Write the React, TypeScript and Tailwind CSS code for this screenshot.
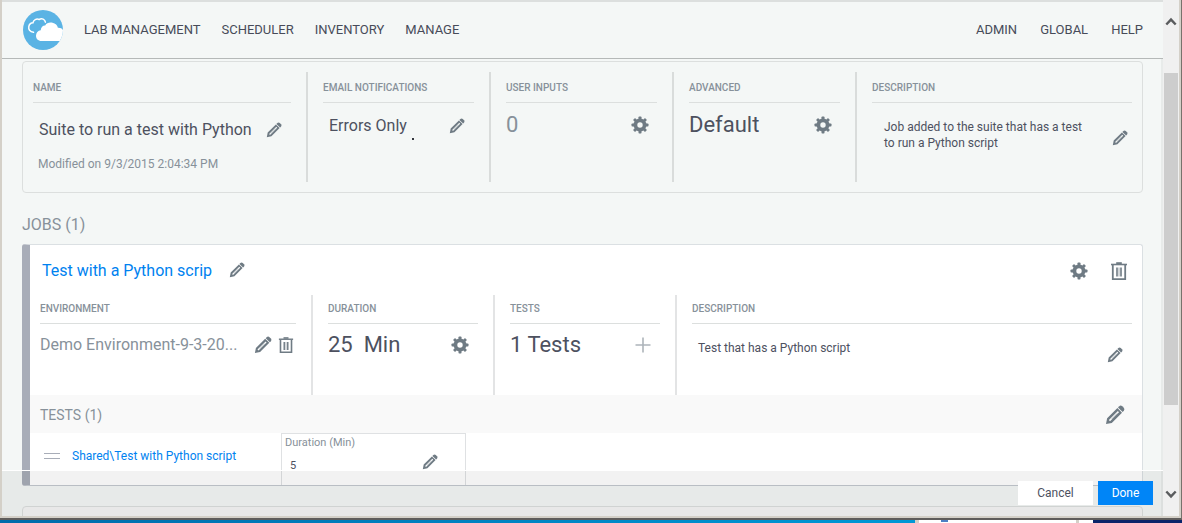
import React from 'react';

function Pencil({ size = 16 }: { size?: number }) {
  return (
    <svg width={size} height={size} viewBox="0 0 16 16" fill="#6f7b84" aria-hidden="true">
      <path
        fillRule="evenodd"
        d="M0.8 15.2 L1.7 10.6 L9.9 2.4 L13.6 6.1 L5.4 14.3 Z M4 12.9 L11.2 5.7 L10.3 4.8 L3.1 12 Z"
      />
      <path d="M10.4 1.9 L11.4 0.9 Q12.6 0 13.8 1 L15 2.2 Q16 3.4 15.1 4.6 L14.1 5.6 Z" />
      <path d="M5.4 11.2 L9.9 6.7" stroke="#a3abb1" strokeWidth="0.8" />
    </svg>
  );
}

const TEETH = [0, 45, 90, 135, 180, 225, 270, 315];

function Gear() {
  return (
    <svg width="18" height="18" viewBox="0 0 18 18" aria-hidden="true">
      <circle cx="9" cy="9" r="4.6" fill="none" stroke="#6f7b84" strokeWidth="3.8" />
      {TEETH.map((a) => (
        <rect key={a} x="7.5" y="0.5" width="3" height="4" rx="0.8" fill="#6f7b84" transform={`rotate(${a} 9 9)`} />
      ))}
    </svg>
  );
}

function Trash({ size = 18 }: { size?: number }) {
  return (
    <svg width={size} height={size} viewBox="0 0 18 18" fill="none" stroke="#6f7b84" aria-hidden="true">
      <path d="M1 2.5H17" strokeWidth="1.6" />
      <path d="M6.2 1.1H11.8" strokeWidth="1.8" />
      <path d="M2.8 3V17.1H15.2V3" strokeWidth="1.8" />
      <path d="M7 5.5V14.5M11 5.5V14.5" strokeWidth="1.6" />
      <path d="M9 5.5V14.5" strokeWidth="1.5" stroke="#c3c8cc" />
    </svg>
  );
}

function IconButton({ label, children }: { label: string; children: React.ReactNode }) {
  return (
    <button type="button" aria-label={label} className="flex shrink-0 items-center justify-center">
      {children}
    </button>
  );
}

function Logo() {
  return (
    <svg width="40" height="40" viewBox="0 0 40 40" aria-label="Home" role="img">
      <defs>
        <clipPath id="disc">
          <circle cx="20" cy="20" r="20" />
        </clipPath>
      </defs>
      <circle cx="20" cy="20" r="20" fill="#5ab3e4" />
      <g clipPath="url(#disc)">
        <path
          d="M10.5 22.3 C6.8 21.8 5.3 19.3 5.8 16.6 C6.2 14.2 8 12.8 10 12.7 C10.5 9.8 13.5 8.4 16.2 9.5 C18.8 7.8 22 9.3 22.4 12.2"
          fill="none"
          stroke="#fff"
          strokeWidth="1.5"
          strokeLinecap="round"
        />
        <path
          d="M18.5 31 C15 31 13 28.5 13 25.7 C13 22.7 15 20.6 17.7 20.2 C18 17 20 15.3 22.2 15.5 C23.5 13 26.5 12.2 29.5 12.8 C32.5 13.3 34.4 15.4 34.9 17.8 C37 17.6 39 18.4 40 20 V31 Z"
          fill="#fff"
        />
      </g>
    </svg>
  );
}

const navLink = 'text-[13px] leading-5 text-[#474b59]';

function Header() {
  return (
    <header className="flex h-[59px] shrink-0 items-center border-t-2 border-b border-t-[#dcdfde] border-b-[#b5b9b8] pr-5 pl-[21px]">
      <Logo />
      <nav className="ml-[21px] flex flex-1 items-center gap-[21px]">
        <a href="#lab" className={navLink}>LAB MANAGEMENT</a>
        <a href="#scheduler" className={navLink}>SCHEDULER</a>
        <a href="#inventory" className={navLink}>INVENTORY</a>
        <a href="#manage" className={navLink}>MANAGE</a>
      </nav>
      <nav className="flex items-center gap-[23px]">
        <a href="#admin" className={navLink}>ADMIN</a>
        <a href="#global" className={navLink}>GLOBAL</a>
        <a href="#help" className={navLink}>HELP</a>
      </nav>
    </header>
  );
}

function Label({ tight, children }: { tight?: boolean; children: React.ReactNode }) {
  return (
    <h3
      className={`${tight ? 'py-[6px]' : 'pt-2 pb-[6px]'} border-b border-[#dcdfde] text-[10px] leading-4 font-medium whitespace-nowrap text-[#87919a]`}
    >
      {children}
    </h3>
  );
}

function SuiteCard() {
  const col = 'w-[183px] shrink-0 border-r-2 border-[#d9dcdb] px-[15px]';
  return (
    <section className="flex h-[132px] rounded-[4px] border border-[#dcdfde] p-[10px]">
      <div className="w-[275px] shrink-0 border-r-2 border-[#d9dcdb] pr-[15px]">
        <Label>NAME</Label>
        <div className="flex items-center justify-between pt-[15px] pr-[9px] pl-[6px]">
          <span className="text-base leading-6 whitespace-nowrap text-[#4d515f]">Suite to run a test with Python</span>
          <IconButton label="Edit name"><Pencil /></IconButton>
        </div>
        <p className="mt-[14px] pl-[5px] text-xs leading-4 text-[#87919a]">Modified on 9/3/2015 2:04:34 PM</p>
      </div>
      <div className={col}>
        <Label>EMAIL NOTIFICATIONS</Label>
        <div className="flex items-center justify-between pt-[11px] pr-[9px] pl-[6px]">
          <span className="relative text-base leading-6 text-[#4d515f]">
            Errors Only
            <i className="absolute -right-[7px] -bottom-[2px] size-[2px] bg-[#33363d]" />
          </span>
          <IconButton label="Edit email notifications"><Pencil /></IconButton>
        </div>
      </div>
      <div className={col}>
        <Label>USER INPUTS</Label>
        <div className="flex items-center justify-between pt-[6px] pr-2">
          <span className="text-[22px] leading-8 text-[#87919a]">0</span>
          <IconButton label="User input settings"><Gear /></IconButton>
        </div>
      </div>
      <div className={col}>
        <Label>ADVANCED</Label>
        <div className="flex items-center justify-between pt-[6px] pr-2">
          <span className="text-[22px] leading-8 text-[#4d515f]">Default</span>
          <IconButton label="Advanced settings"><Gear /></IconButton>
        </div>
      </div>
      <div className="min-w-0 flex-1 pl-[15px]">
        <Label>DESCRIPTION</Label>
        <div className="flex items-center justify-between pt-4 pr-1 pl-3">
          <p className="w-[204px] text-xs leading-4 text-[#4d515f]">
            Job added to the suite that has a test to run a Python script
          </p>
          <div className="pt-[6px]">
            <IconButton label="Edit suite description"><Pencil /></IconButton>
          </div>
        </div>
      </div>
    </section>
  );
}

function JobCard() {
  const col = 'w-[182px] shrink-0 border-r-2 border-[#e3e4e5] px-[15px]';
  return (
    <section className="rounded-[3px] border border-l-8 border-[#dbe0e3] border-b-[#c3c9cf] border-l-[#a8adb8] bg-white">
      <div className="flex h-[50px] items-center justify-between pr-[14px] pl-3">
        <div className="flex items-center gap-[14px]">
          <input
            aria-label="Job name"
            defaultValue="Test with a Python scrip"
            className="w-[173px] bg-transparent pt-[2px] text-base leading-6 text-[#0082f0] outline-none"
          />
          <IconButton label="Edit job name"><Pencil /></IconButton>
        </div>
        <div className="flex items-center gap-[22px] pt-[2px]">
          <IconButton label="Job settings"><Gear /></IconButton>
          <IconButton label="Delete job"><Trash /></IconButton>
        </div>
      </div>
      <div className="flex h-[100px] pr-[10px] pl-[10px]">
        <div className="w-[273px] shrink-0 border-r-2 border-[#e3e4e5] pr-[15px]">
          <Label tight>ENVIRONMENT</Label>
          <div className="flex items-center justify-between pt-[9px] pr-[2px]">
            <span className="text-base leading-6 whitespace-nowrap text-[#87919a]">Demo Environment-9-3-20...</span>
            <div className="flex items-center gap-[6px]">
              <IconButton label="Edit environment"><Pencil size={18} /></IconButton>
              <IconButton label="Delete environment"><Trash size={16} /></IconButton>
            </div>
          </div>
        </div>
        <div className={col}>
          <Label tight>DURATION</Label>
          <div className="flex items-center justify-between pt-[5px] pr-[9px]">
            <span className="text-[22px] leading-8 whitespace-pre text-[#4d515f]">{'25  Min'}</span>
            <IconButton label="Duration settings"><Gear /></IconButton>
          </div>
        </div>
        <div className={col}>
          <Label tight>TESTS</Label>
          <div className="flex items-center justify-between pt-[5px] pr-[9px]">
            <span className="text-[22px] leading-8 text-[#4d515f]">1 Tests</span>
            <IconButton label="Add test">
              <svg width="16" height="16" viewBox="0 0 16 16" stroke="#adb4ba" strokeWidth="1.6" aria-hidden="true">
                <path d="M8 0.5V15.5M0.5 8H15.5" />
              </svg>
            </IconButton>
          </div>
        </div>
        <div className="min-w-0 flex-1 pl-[15px]">
          <Label tight>DESCRIPTION</Label>
          <div className="flex items-end justify-between pt-4 pr-[9px] pl-[6px]">
            <p className="self-start text-xs leading-4 text-[#4d515f]">Test that has a Python script</p>
            <div className="pt-[7px]">
              <IconButton label="Edit job description"><Pencil /></IconButton>
            </div>
          </div>
        </div>
      </div>
      <div className="flex h-[38px] items-center justify-between bg-[#f9f9f9] pt-[2px] pr-[17px] pl-[10px]">
        <h3 className="text-sm leading-5 text-[#87919a]">TESTS (1)</h3>
        <IconButton label="Edit tests"><Pencil size={20} /></IconButton>
      </div>
      <ul>
        <li className="flex h-[52px] items-start">
          <div className="flex w-[251px] items-center gap-3 pt-[15px] pl-[14px]">
            <span className="h-[6px] w-4 border-y border-[#a8adb8]" />
            <a href="#test" className="text-xs leading-4 text-[#0082f0]">Shared\Test with Python script</a>
          </div>
          <div className="h-full w-[185px] border border-b-0 border-[#dfe1e3] pl-[3px]">
            <div className="pt-px text-[11px] leading-4 text-[#87919a]">Duration (Min)</div>
            <div className="flex items-start justify-between pt-[3px] pr-[27px] pl-[5px]">
              <span className="pt-1 text-[11px] leading-4 text-[#4d515f]">5</span>
              <IconButton label="Edit duration"><Pencil /></IconButton>
            </div>
          </div>
        </li>
      </ul>
    </section>
  );
}

function Scrollbar() {
  return (
    <div className="flex w-4 shrink-0 flex-col items-center bg-[#f0f0f0]" aria-hidden="true">
      <svg width="12" height="9" viewBox="0 0 12 9" className="mt-[17px] shrink-0" fill="none" stroke="#5a5c5e" strokeWidth="2.4">
        <path d="M1.3 7.5 L6 2.6 L10.7 7.5" />
      </svg>
      <div className="mt-[47px] h-[332px] w-[14px] shrink-0 bg-[#cdcdcd]" />
      <svg width="12" height="9" viewBox="0 0 12 9" className="mt-auto mb-[17px] shrink-0" fill="none" stroke="#5a5c5e" strokeWidth="2.4">
        <path d="M1.3 1.5 L6 6.4 L10.7 1.5" />
      </svg>
    </div>
  );
}

export default function App() {
  return (
    <div className="flex h-screen flex-col overflow-hidden bg-[#f4f7f6] font-['Roboto','Liberation_Sans',sans-serif]">
      <div className="flex min-h-0 flex-1 border-r border-b-2 border-r-[#77726c] border-b-[#5f5c5b]">
        <div className="flex min-w-0 flex-1 border-x-2 border-b-2 border-[#d4d0c8]">
          <div className="relative flex min-w-0 flex-1 flex-col">
            <Header />
            <main className="min-h-0 flex-1 overflow-hidden border-r-2 border-[#e8ebea] pt-[2px] pr-[18px] pl-5">
              <SuiteCard />
              <h2 className="pt-[21px] pb-2 text-base leading-[22px] whitespace-nowrap text-[#87919a]">JOBS (1)</h2>
              <JobCard />
              <section className="mt-5 h-[60px] rounded-[4px] border border-[#dcdfde] bg-[#f5f5f5]" />
            </main>
            <footer className="absolute inset-x-0 bottom-0 flex h-[46px] items-start justify-end gap-[5px] border-t border-white bg-black/5 bg-clip-padding pt-[10px] pr-[10px]">
              <button type="button" className="h-6 w-[75px] bg-white text-xs leading-4 text-[#4d515f]">Cancel</button>
              <button type="button" className="h-6 w-[55px] bg-[#0085f7] text-xs leading-4 text-white">Done</button>
            </footer>
          </div>
          <Scrollbar />
        </div>
      </div>
      <div className="flex h-[3px] shrink-0 bg-[#d4d0c8]" aria-hidden="true">
        <div className="flex-1 bg-linear-to-r from-[#006cab] to-[#0098d6]" />
        <div className="ml-[4px] flex w-[157px] bg-white pl-[22px]">
          <span className="h-[2px] w-[7px] bg-[#4c7fc4]" />
        </div>
        <div className="ml-[3px] w-[14px] bg-white" />
        <div className="w-[89px] bg-[#0a246a]" />
      </div>
    </div>
  );
}
